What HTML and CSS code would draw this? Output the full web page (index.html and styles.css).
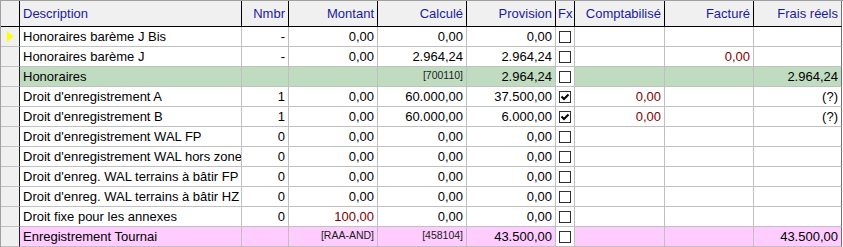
FILE: index.html
```html
<!DOCTYPE html>
<html lang="fr">
<head>
<meta charset="utf-8">
<title>Grille</title>
<link rel="stylesheet" href="styles.css">
</head>
<body>
<div class="grid">
  <div class="row head">
    <div class="c ind"></div>
    <div class="c desc">Description</div>
    <div class="c">Nmbr</div>
    <div class="c">Montant</div>
    <div class="c">Calculé</div>
    <div class="c">Provision</div>
    <div class="c fxh">Fx</div>
    <div class="c">Comptabilisé</div>
    <div class="c">Facturé</div>
    <div class="c last">Frais réels</div>
  </div>

  <div class="row">
    <div class="c ind"><svg class="cur" width="7" height="11" viewBox="0 0 7 11"><polygon points="0,0 6.5,5.5 0,11" fill="#ffff00"/></svg></div>
    <div class="c desc">Honoraires barème J Bis</div>
    <div class="c">-</div>
    <div class="c">0,00</div>
    <div class="c">0,00</div>
    <div class="c">0,00</div>
    <div class="c fx"><span class="cb"></span></div>
    <div class="c"></div>
    <div class="c"></div>
    <div class="c last"></div>
  </div>

  <div class="row">
    <div class="c ind"></div>
    <div class="c desc">Honoraires barème J</div>
    <div class="c">-</div>
    <div class="c">0,00</div>
    <div class="c">2.964,24</div>
    <div class="c">2.964,24</div>
    <div class="c fx"><span class="cb"></span></div>
    <div class="c"></div>
    <div class="c red">0,00</div>
    <div class="c last"></div>
  </div>

  <div class="row green">
    <div class="c ind"></div>
    <div class="c desc">Honoraires</div>
    <div class="c"></div>
    <div class="c"></div>
    <div class="c code">[700110]</div>
    <div class="c">2.964,24</div>
    <div class="c fx"><span class="cb"></span></div>
    <div class="c"></div>
    <div class="c"></div>
    <div class="c last">2.964,24</div>
  </div>

  <div class="row">
    <div class="c ind"></div>
    <div class="c desc">Droit d'enregistrement A</div>
    <div class="c">1</div>
    <div class="c">0,00</div>
    <div class="c">60.000,00</div>
    <div class="c">37.500,00</div>
    <div class="c fx"><span class="cb"><svg width="10" height="10" viewBox="0 0 10 10"><polyline points="1.5,4.5 4,7 8.5,2.5" fill="none" stroke="#000" stroke-width="2"/></svg></span></div>
    <div class="c red">0,00</div>
    <div class="c"></div>
    <div class="c last">(?)</div>
  </div>

  <div class="row">
    <div class="c ind"></div>
    <div class="c desc">Droit d'enregistrement B</div>
    <div class="c">1</div>
    <div class="c">0,00</div>
    <div class="c">60.000,00</div>
    <div class="c">6.000,00</div>
    <div class="c fx"><span class="cb"><svg width="10" height="10" viewBox="0 0 10 10"><polyline points="1.5,4.5 4,7 8.5,2.5" fill="none" stroke="#000" stroke-width="2"/></svg></span></div>
    <div class="c red">0,00</div>
    <div class="c"></div>
    <div class="c last">(?)</div>
  </div>

  <div class="row">
    <div class="c ind"></div>
    <div class="c desc">Droit d'enregistrement WAL FP</div>
    <div class="c">0</div>
    <div class="c">0,00</div>
    <div class="c">0,00</div>
    <div class="c">0,00</div>
    <div class="c fx"><span class="cb"></span></div>
    <div class="c"></div>
    <div class="c"></div>
    <div class="c last"></div>
  </div>

  <div class="row">
    <div class="c ind"></div>
    <div class="c desc">Droit d'enregistrement WAL hors zone</div>
    <div class="c">0</div>
    <div class="c">0,00</div>
    <div class="c">0,00</div>
    <div class="c">0,00</div>
    <div class="c fx"><span class="cb"></span></div>
    <div class="c"></div>
    <div class="c"></div>
    <div class="c last"></div>
  </div>

  <div class="row">
    <div class="c ind"></div>
    <div class="c desc">Droit d'enreg. WAL terrains à bâtir FP</div>
    <div class="c">0</div>
    <div class="c">0,00</div>
    <div class="c">0,00</div>
    <div class="c">0,00</div>
    <div class="c fx"><span class="cb"></span></div>
    <div class="c"></div>
    <div class="c"></div>
    <div class="c last"></div>
  </div>

  <div class="row">
    <div class="c ind"></div>
    <div class="c desc">Droit d'enreg. WAL terrains à bâtir HZ</div>
    <div class="c">0</div>
    <div class="c">0,00</div>
    <div class="c">0,00</div>
    <div class="c">0,00</div>
    <div class="c fx"><span class="cb"></span></div>
    <div class="c"></div>
    <div class="c"></div>
    <div class="c last"></div>
  </div>

  <div class="row">
    <div class="c ind"></div>
    <div class="c desc">Droit fixe pour les annexes</div>
    <div class="c">0</div>
    <div class="c red">100,00</div>
    <div class="c">0,00</div>
    <div class="c">0,00</div>
    <div class="c fx"><span class="cb"></span></div>
    <div class="c"></div>
    <div class="c"></div>
    <div class="c last"></div>
  </div>

  <div class="row pink">
    <div class="c ind"></div>
    <div class="c desc">Enregistrement Tournai</div>
    <div class="c"></div>
    <div class="c code">[RAA-AND]</div>
    <div class="c code">[458104]</div>
    <div class="c">43.500,00</div>
    <div class="c fx"><span class="cb"></span></div>
    <div class="c"></div>
    <div class="c"></div>
    <div class="c last">43.500,00</div>
  </div>
</div>
</body>
</html>
```

FILE: styles.css
```css
html, body {
  margin: 0;
  padding: 0;
  background: #ffffff;
}

body {
  font-family: "Liberation Sans", Arial, sans-serif;
  font-size: 13px;
  color: #000000;
}

.grid {
  width: 842px;
  border-top: 1px solid #a0a0a0;
  border-left: 1px solid #a0a0a0;
}

.row {
  display: grid;
  grid-template-columns: 19px 222px 47px 89px 89px 89px 19px 90px 89px 88px;
}

.c {
  box-sizing: border-box;
  height: 20px;
  padding: 1px 3px 0 3px;
  line-height: 18px;
  text-align: right;
  white-space: nowrap;
  overflow: hidden;
  border-right: 1px solid #c0c0c0;
  border-bottom: 1px solid #c0c0c0;
}

.c.desc {
  text-align: left;
}

.c.last {
  border-right-color: #707070;
}

.c.ind {
  padding: 0;
  background: #f0f0f0;
  border-right-color: #202020;
}

.cur {
  display: block;
  margin: 4px 0 0 6px;
}

.head .c {
  height: 26px;
  padding-top: 0;
  line-height: 25px;
  background: #f0f0f0;
  color: #1a1aa0;
  border-right-color: #000000;
  border-bottom-color: #000000;
}

.head .c.last {
  border-right-color: #707070;
}

.head .c.fxh {
  text-align: left;
  padding-left: 2px;
}

.green .c {
  background: #c0dcc0;
}

.pink .c {
  background: #ffccff;
}

.row .c.ind {
  background: #f0f0f0;
}

.row .c.fx {
  background: #ffffff;
  padding: 0;
}

.cb {
  display: block;
  box-sizing: border-box;
  width: 12px;
  height: 12px;
  margin: 4px 0 0 3px;
  border: 1px solid #303030;
  background: #ffffff;
}

.cb svg {
  display: block;
}

.red {
  color: #800000;
}

.c.code {
  font-size: 10.5px;
  padding-top: 0;
  line-height: 16px;
  color: #202020;
}
```
